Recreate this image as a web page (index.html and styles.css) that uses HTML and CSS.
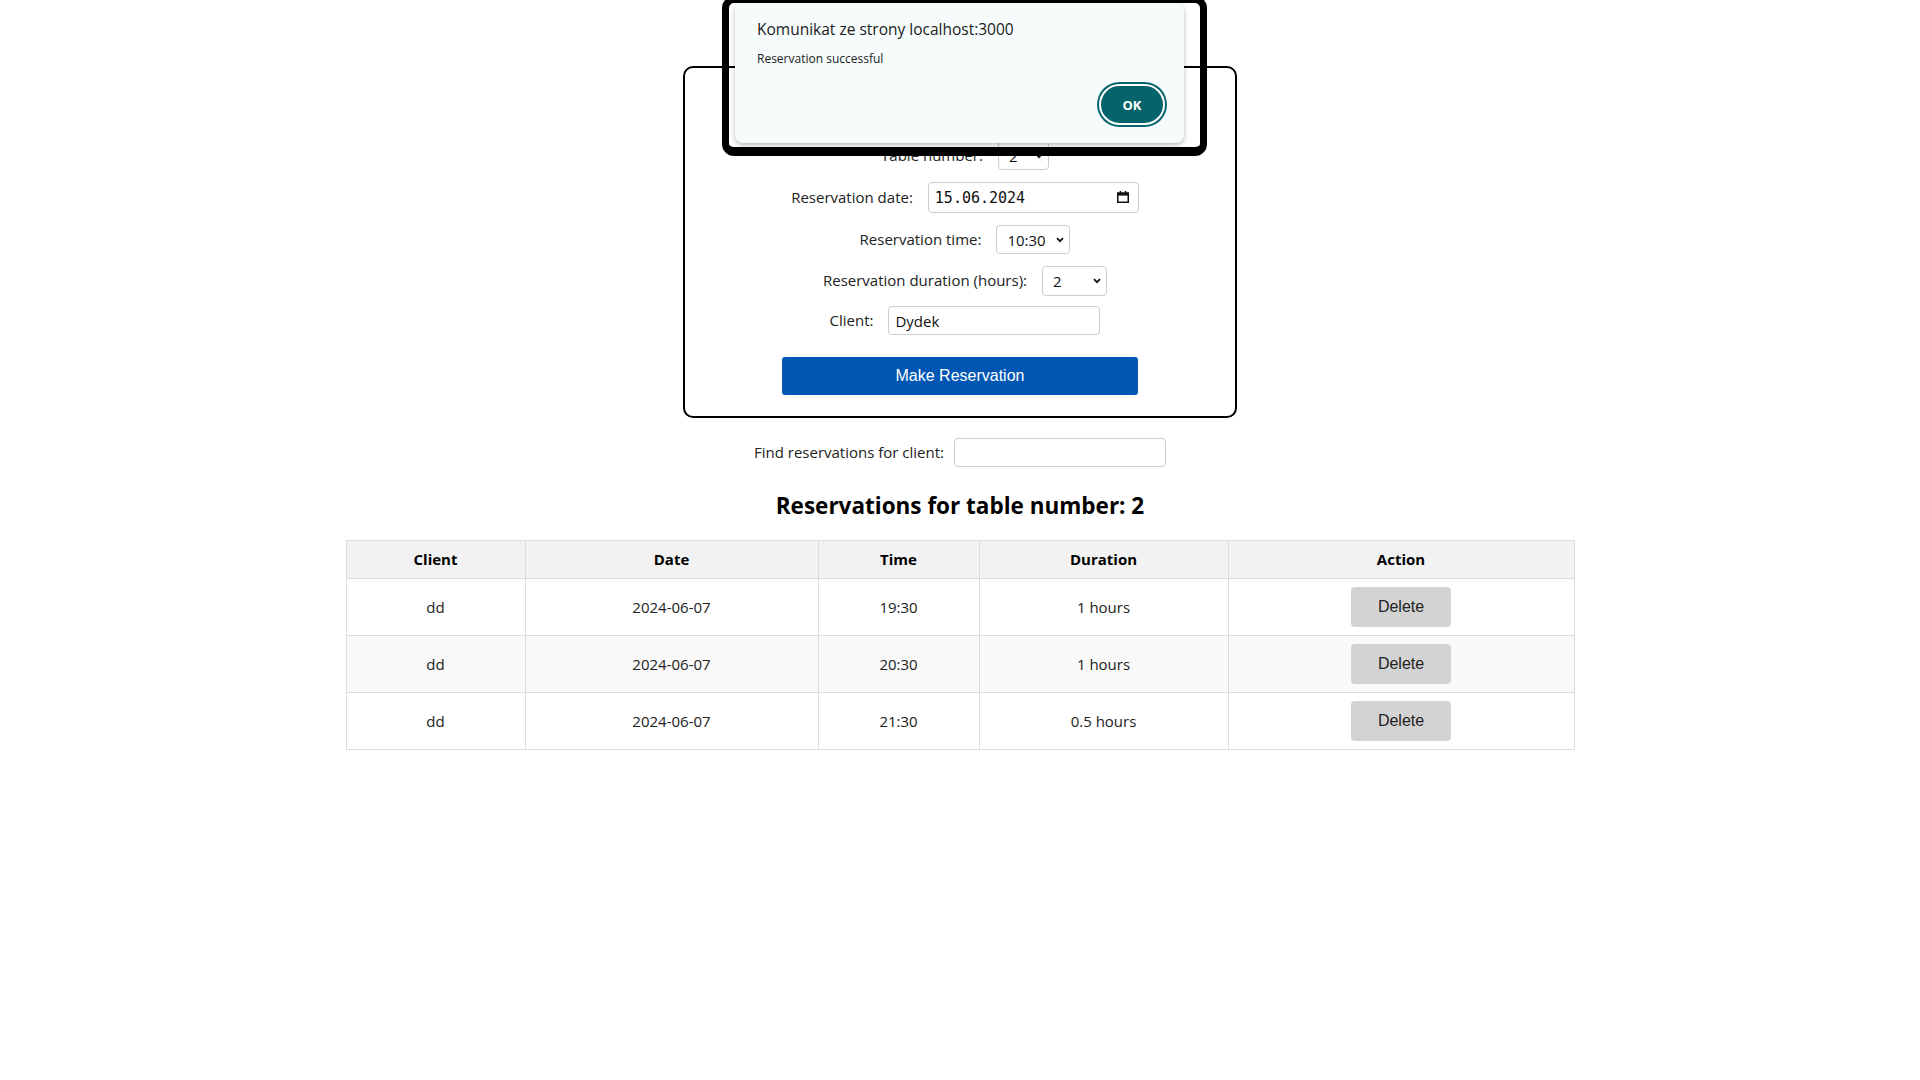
FILE: index.html
```html
<!DOCTYPE html>
<html lang="en">
<head>
<meta charset="utf-8">
<title>Table reservations</title>
<link rel="stylesheet" href="styles.css">
</head>
<body>
<main class="page">
  <form class="reserve-box">
    <div class="row">
      <label class="label">Table number:</label>
      <span class="select-wrap">
        <select class="control select select-table"><option>2</option></select>
        <svg class="chevron" viewBox="0 0 8 6" width="8" height="6"><path d="M1 1.2 L4 4.2 L7 1.2" fill="none" stroke="#111" stroke-width="1.8"/></svg>
      </span>
    </div>
    <div class="row">
      <label class="label">Reservation date:</label>
      <span class="select-wrap">
        <input class="control date-input" type="text" value="15.06.2024">
        <svg class="cal-icon" viewBox="0 0 12 12" width="12" height="12"><rect x="0.75" y="2" width="10.5" height="9.25" fill="none" stroke="#111" stroke-width="1.5"/><rect x="0.75" y="2" width="10.5" height="2.6" fill="#111"/><rect x="2.6" y="0" width="1.5" height="2.5" fill="#111"/><rect x="7.9" y="0" width="1.5" height="2.5" fill="#111"/></svg>
      </span>
    </div>
    <div class="row">
      <label class="label">Reservation time:</label>
      <span class="select-wrap">
        <select class="control select select-time"><option>10:30</option></select>
        <svg class="chevron" viewBox="0 0 8 6" width="8" height="6"><path d="M1 1.2 L4 4.2 L7 1.2" fill="none" stroke="#111" stroke-width="1.8"/></svg>
      </span>
    </div>
    <div class="row row-tight">
      <label class="label">Reservation duration (hours):</label>
      <span class="select-wrap">
        <select class="control select select-duration"><option>2</option></select>
        <svg class="chevron" viewBox="0 0 8 6" width="8" height="6"><path d="M1 1.2 L4 4.2 L7 1.2" fill="none" stroke="#111" stroke-width="1.8"/></svg>
      </span>
    </div>
    <div class="row row-last">
      <label class="label">Client:</label>
      <input class="control text-input" type="text" value="Dydek">
    </div>
    <button type="button" class="primary-btn">Make Reservation</button>
  </form>

  <div class="search-row">
    <label class="label-plain">Find reservations for client:</label>
    <input class="control text-input" type="text" value="">
  </div>

  <h2 class="list-title">Reservations for table number: 2</h2>

  <table class="res-table">
    <colgroup>
      <col class="col-client"><col class="col-date"><col class="col-time"><col class="col-duration"><col class="col-action">
    </colgroup>
    <thead>
      <tr><th>Client</th><th>Date</th><th>Time</th><th>Duration</th><th>Action</th></tr>
    </thead>
    <tbody>
      <tr><td>dd</td><td>2024-06-07</td><td>19:30</td><td>1 hours</td><td><button type="button" class="delete-btn">Delete</button></td></tr>
      <tr><td>dd</td><td>2024-06-07</td><td>20:30</td><td>1 hours</td><td><button type="button" class="delete-btn">Delete</button></td></tr>
      <tr><td>dd</td><td>2024-06-07</td><td>21:30</td><td>0.5 hours</td><td><button type="button" class="delete-btn">Delete</button></td></tr>
    </tbody>
  </table>
</main>

<div class="alert-frame">
  <div class="alert" role="alertdialog">
    <div class="alert-title">Komunikat ze strony localhost:3000</div>
    <div class="alert-msg">Reservation successful</div>
    <div class="alert-actions"><button type="button" class="ok-btn">OK</button></div>
  </div>
</div>
</body>
</html>
```

FILE: styles.css
```css
html, body {
  margin: 0;
  padding: 0;
  background: #fff;
}

body {
  font-family: "Open Sans", "Noto Sans", sans-serif;
  font-size: 15px;
  color: #222;
  position: relative;
  min-height: 1080px;
}

.page {
  display: flex;
  flex-direction: column;
  align-items: center;
}

/* ---------- reservation form ---------- */
.reserve-box {
  margin-top: 66px;
  width: 554px;
  box-sizing: border-box;
  border: 2px solid #000;
  border-radius: 10px;
  padding: 73px 0 21px;
}

.row {
  display: flex;
  justify-content: center;
  align-items: center;
  padding-left: 10px;
  margin-bottom: 12px;
}

.row-tight { margin-bottom: 10px; }
.row-last { margin-bottom: 0; }

.label {
  margin-right: 15px;
  line-height: 20px;
  position: relative;
  top: -1px;
}

.label-plain {
  margin-right: 10px;
  line-height: 20px;
  position: relative;
  top: -1px;
}

.control {
  box-sizing: border-box;
  border: 1px solid #ccc;
  border-radius: 4px;
  background: #fff;
  color: #111;
  font-family: "Open Sans", "Noto Sans", sans-serif;
  font-size: 15px;
  margin: 0;
  outline: none;
}

.select-wrap {
  position: relative;
  display: inline-flex;
}

.select {
  appearance: none;
  -webkit-appearance: none;
  height: 29px;
  padding: 0 0 0 10px;
}

.select-table { width: 51px; }
.select-time { width: 74px; }
.select-duration { width: 65px; height: 30px; }

.chevron {
  position: absolute;
  right: 6px;
  top: 50%;
  margin-top: -3px;
  pointer-events: none;
}

.date-input {
  width: 211px;
  height: 31px;
  padding: 0 0 0 6px;
  font-family: "DejaVu Sans Mono", "Liberation Mono", monospace;
  font-size: 15px;
}

.cal-icon {
  position: absolute;
  right: 10px;
  top: 9px;
  pointer-events: none;
}

.text-input {
  width: 212px;
  height: 29px;
  padding: 0 6px;
}

.primary-btn {
  display: block;
  margin: 22px auto 0;
  width: 356px;
  height: 38px;
  border: none;
  border-radius: 3px;
  background: #0056b3;
  color: #fff;
  font-family: "Liberation Sans", Arial, sans-serif;
  font-size: 16px;
  padding: 0;
}

/* ---------- search ---------- */
.search-row {
  margin-top: 20px;
  display: flex;
  align-items: center;
}

/* ---------- list ---------- */
.list-title {
  margin: 25px 0 21px;
  font-size: 22.5px;
  line-height: 27px;
  font-weight: 700;
  color: #000;
}

.res-table {
  width: 1228px;
  border-collapse: collapse;
  border: 1px solid #ddd;
  table-layout: fixed;
}

.col-client { width: 179px; }
.col-date { width: 293px; }
.col-time { width: 161px; }
.col-duration { width: 249px; }
.col-action { width: 346px; }

.res-table th,
.res-table td {
  border: 1px solid #ddd;
  text-align: center;
  vertical-align: middle;
  padding: 8px;
}

.res-table th {
  background: #f2f2f2;
  font-weight: 700;
  color: #000;
  line-height: 21px;
}

.res-table td {
  line-height: 20px;
  color: #222;
}

.res-table tbody tr:nth-child(even) td {
  background: #f9f9f9;
}

.delete-btn {
  width: 100px;
  height: 40px;
  border: none;
  border-radius: 4px;
  background: #d3d3d3;
  color: #222;
  font-family: "Liberation Sans", Arial, sans-serif;
  font-size: 16px;
  padding: 0;
  display: block;
  margin: 0 auto;
}

/* ---------- browser alert overlay ---------- */
.alert-frame {
  position: absolute;
  left: 722px;
  top: -4px;
  width: 485px;
  height: 160px;
  box-sizing: border-box;
  border: 7px solid #000;
  border-bottom-width: 9px;
  border-radius: 12px;
  z-index: 10;
}

.alert {
  position: absolute;
  left: 6px;
  top: 0;
  width: 449px;
  height: 140px;
  box-sizing: border-box;
  background: #f6fcfc;
  border-radius: 8px;
  box-shadow: 0 2px 5px rgba(0, 0, 0, 0.28);
  padding: 16px 19px 18px 22px;
  display: flex;
  flex-direction: column;
}

.alert-title {
  font-size: 15.5px;
  line-height: 21px;
  color: #1b1b1b;
}

.alert-msg {
  margin-top: 11px;
  font-size: 12px;
  line-height: 16px;
  color: #1b1b1b;
}

.alert-actions {
  margin-top: auto;
  display: flex;
  justify-content: flex-end;
}

.ok-btn {
  width: 66px;
  height: 41px;
  box-sizing: border-box;
  border: 2px solid #fff;
  border-radius: 21px;
  background: #05646b;
  box-shadow: 0 0 0 2px #05646b;
  color: #fff;
  font-family: "Open Sans", "Noto Sans", sans-serif;
  font-weight: 700;
  font-size: 13px;
  padding: 0;
}
```
